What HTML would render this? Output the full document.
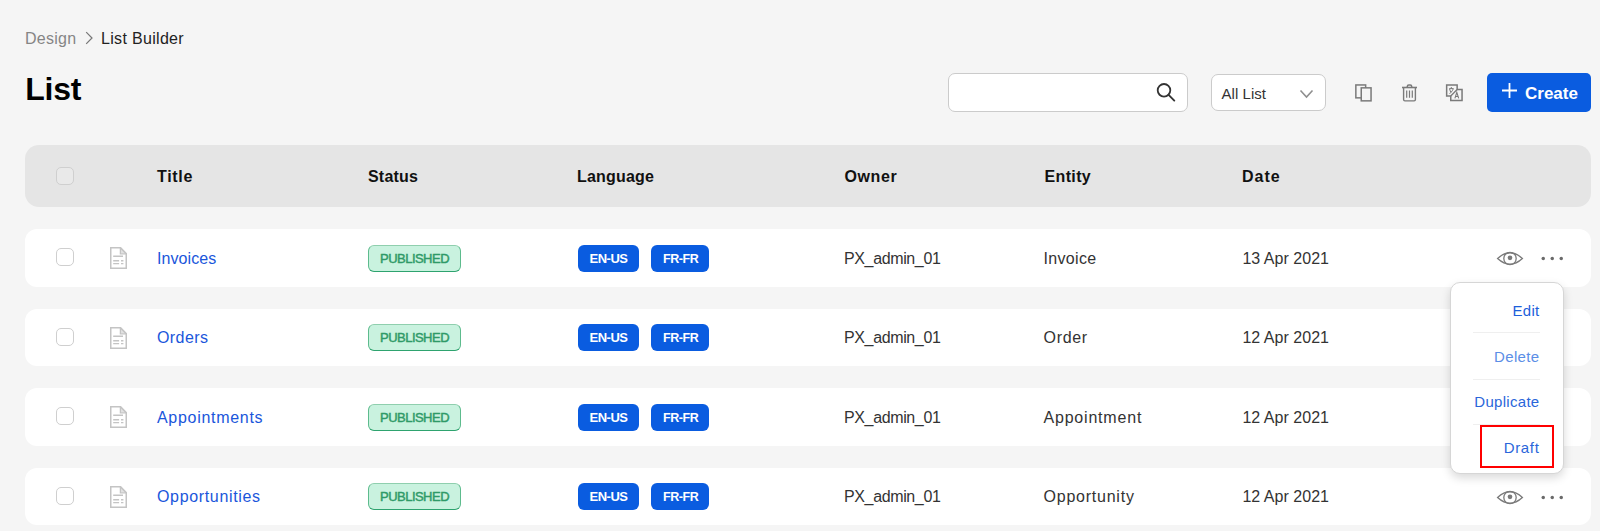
<!DOCTYPE html>
<html>
<head>
<meta charset="utf-8">
<style>
*{box-sizing:border-box;margin:0;padding:0}
html,body{width:1600px;height:531px;overflow:hidden;background:#f5f5f5;font-family:"Liberation Sans",sans-serif;}
.a{position:absolute}
.t{position:absolute;white-space:nowrap;line-height:1}
.search{left:948px;top:73px;width:240px;height:39px;background:#fff;border:1px solid #cbcbcb;border-radius:7px}
.sel{left:1211px;top:74px;width:115px;height:37px;background:#fff;border:1px solid #cbcbcb;border-radius:7px}
.btn{left:1487px;top:73px;width:104px;height:39px;background:#0a5ce0;border-radius:5px}
.hdr{left:25px;top:145px;width:1566px;height:62px;background:#e5e5e5;border-radius:14px}
.row{left:25px;width:1566px;height:57.5px;background:#fff;border-radius:12px}
.cb{width:18px;height:18px;border:1.3px solid #cfcfcf;border-radius:5px;background:#fff}
.pub{width:93px;height:27px;background:#c9f2df;border:1px solid #5dbb8d;border-top-color:#8fcfae;border-bottom-color:#2ea36f;border-radius:6px}
.lang{height:27px;background:#0a5ce0;border-radius:6px}
.menu{left:1449.5px;top:282px;width:114px;height:192px;background:#fff;border:1px solid #d6d6d6;border-radius:10px;box-shadow:0 4px 10px rgba(0,0,0,0.15)}
.sep{left:1473px;width:67px;height:1px;background:#efefef}
</style>
</head>
<body>
<div class="t" style="left:25px;top:31px;font-size:16px;color:#858585;letter-spacing:0.27px;">Design</div>
<svg class="a" style="left:84px;top:30px" width="10" height="16" viewBox="0 0 10 16"><path d="M2.2 2.2 L8 8 L2.2 13.8" fill="none" stroke="#777" stroke-width="1.2"/></svg>
<div class="t" style="left:101px;top:31px;font-size:16px;color:#222;letter-spacing:0.32px;">List Builder</div>
<div class="t" style="left:25.3px;top:73px;font-size:32px;font-weight:700;color:#000;letter-spacing:-0.3px;">List</div>
<div class="a search"></div>
<svg class="a" style="left:1154px;top:81px" width="24" height="24" viewBox="0 0 24 24"><circle cx="10" cy="9.3" r="6.3" fill="none" stroke="#333" stroke-width="1.8"/><path d="M14.6 13.9 L20.3 19.6" stroke="#333" stroke-width="1.9" stroke-linecap="round"/></svg>
<div class="a sel"></div>
<div class="t" style="left:1221.5px;top:86px;font-size:15px;color:#333;letter-spacing:0.05px;">All List</div>
<svg class="a" style="left:1298px;top:88px" width="17" height="12" viewBox="0 0 17 12"><path d="M2.5 2.5 L8.5 9 L14.5 2.5" fill="none" stroke="#8f8f8f" stroke-width="1.6"/></svg>
<svg class="a" style="left:1350px;top:80px" width="26" height="26" viewBox="0 0 26 26"><rect x="5.85" y="4.95" width="9.8" height="12.9" fill="none" stroke="#7a7a7a" stroke-width="1.5"/><rect x="11.25" y="7.85" width="9.8" height="13" fill="#f5f5f5" stroke="#7a7a7a" stroke-width="1.5"/></svg>
<svg class="a" style="left:1397px;top:80px" width="26" height="26" viewBox="0 0 26 26"><path d="M5 7.5 H20" stroke="#7a7a7a" stroke-width="1.6"/><path d="M10.3 7.3 V6.6 Q10.3 5.1 11.8 5.1 H13.2 Q14.7 5.1 14.7 6.6 V7.3" fill="none" stroke="#7a7a7a" stroke-width="1.5"/><path d="M6.6 8 V19.6 Q6.6 20.9 7.9 20.9 H17.1 Q18.4 20.9 18.4 19.6 V8" fill="none" stroke="#7a7a7a" stroke-width="1.4"/><path d="M9.7 10.5 V17.7 M12.5 10.5 V17.7 M15.3 10.5 V17.7" stroke="#7a7a7a" stroke-width="1.2"/></svg>
<svg class="a" style="left:1440px;top:80px" width="26" height="26" viewBox="0 0 26 26"><path d="M6.65 4.95 H17.15 V9.55 H22.05 V20.55 H10.75 V15.95 H6.65 Z" fill="none" stroke="#7a7a7a" stroke-width="1.5" stroke-linejoin="miter"/><path d="M17.15 9.55 L10.75 15.95" stroke="#7a7a7a" stroke-width="1.3"/><path d="M9.2 8.6 H13.4 L12.4 10.6 M11.3 7 V8.6 M9.6 9 L10.8 12.5 L9.6 13.8 M12.4 10.6 L11 12.4" fill="none" stroke="#7a7a7a" stroke-width="1"/><path d="M14.9 18.4 L16.8 12.3 L18.7 18.4 M15.6 16.5 H18" fill="none" stroke="#7a7a7a" stroke-width="1.1"/></svg>
<div class="a btn"></div>
<svg class="a" style="left:1501px;top:82px" width="17" height="17" viewBox="0 0 17 17"><path d="M8.5 1 V16 M1 8.5 H16" stroke="#fff" stroke-width="1.8"/></svg>
<div class="t" style="left:1525px;top:85px;font-size:17px;font-weight:700;color:#fff;">Create</div>
<div class="a hdr"></div>
<div class="a cb" style="left:56px;top:167px;background:#e9e9e9"></div>
<div class="t" style="left:157px;top:169px;font-size:16px;font-weight:700;color:#111;letter-spacing:0.7px;">Title</div>
<div class="t" style="left:368px;top:169px;font-size:16px;font-weight:700;color:#111;letter-spacing:0.2px;">Status</div>
<div class="t" style="left:577px;top:169px;font-size:16px;font-weight:700;color:#111;letter-spacing:0.18px;">Language</div>
<div class="t" style="left:844.5px;top:169px;font-size:16px;font-weight:700;color:#111;letter-spacing:0.6px;">Owner</div>
<div class="t" style="left:1044.5px;top:169px;font-size:16px;font-weight:700;color:#111;letter-spacing:0.36px;">Entity</div>
<div class="t" style="left:1242px;top:169px;font-size:16px;font-weight:700;color:#111;letter-spacing:1.0px;">Date</div>
<div class="a row" style="top:229.00px"></div>
<div class="a cb" style="left:56px;top:248.00px"></div>
<svg class="a" style="left:109px;top:246.25px" width="19" height="24" viewBox="0 0 19 24"><path d="M11.6 1.9 L17.2 7.6 H11.6 Z" fill="#e2e2e2"/><path d="M1.75 1.85 H11.6 L17.25 7.6 V22.35 H1.75 Z" fill="none" stroke="#c4c4c4" stroke-width="1.5"/><path d="M11.4 2.1 V7.8 H17" fill="none" stroke="#c4c4c4" stroke-width="1.3"/><path d="M4.2 10.25 H14 M4.2 14.75 H10.1 M12 14.75 H14.4 M4.2 17.65 H10.1 M12 17.65 H14.4" stroke="#c4c4c4" stroke-width="1.3"/></svg>
<div class="t" style="left:157px;top:251px;font-size:16px;color:#1a56db;letter-spacing:0.07px;">Invoices</div>
<div class="a pub" style="left:368px;top:244.50px"></div>
<div class="t" style="left:380px;top:252px;font-size:13px;color:#2f9a68;letter-spacing:-0.52px;-webkit-text-stroke:0.45px #2f9a68;">PUBLISHED</div>
<div class="a lang" style="left:577.5px;top:244.50px;width:61.5px"></div>
<div class="a lang" style="left:651px;top:244.50px;width:58px"></div>
<div class="t" style="left:589.5px;top:252px;font-size:13px;font-weight:700;color:#fff;letter-spacing:-0.5px;">EN-US</div>
<div class="t" style="left:663px;top:253px;font-size:12.5px;font-weight:700;color:#fff;letter-spacing:-0.45px;">FR-FR</div>
<div class="t" style="left:844px;top:251px;font-size:16px;color:#333;letter-spacing:-0.37px;">PX_admin_01</div>
<div class="t" style="left:1043.5px;top:251px;font-size:16px;color:#333;letter-spacing:0.33px;">Invoice</div>
<div class="t" style="left:1242.4px;top:251px;font-size:16px;color:#333;letter-spacing:0.03px;">13 Apr 2021</div>
<svg class="a" style="left:1495px;top:249.85px" width="30" height="17" viewBox="0 0 30 17"><path d="M2.6 8.5 Q15 -2.9 27.4 8.5 Q15 19.9 2.6 8.5 Z" fill="none" stroke="#7a7a7a" stroke-width="1.3"/><circle cx="15" cy="8.5" r="6.2" fill="none" stroke="#7a7a7a" stroke-width="1.3"/><circle cx="15" cy="7.8" r="2.35" fill="#7a7a7a"/></svg>
<svg class="a" style="left:1539px;top:254.15px" width="26" height="9" viewBox="0 0 26 9"><circle cx="4.25" cy="4.6" r="1.75" fill="#6a6a6a"/><circle cx="13.25" cy="4.6" r="1.75" fill="#6a6a6a"/><circle cx="22.25" cy="4.6" r="1.75" fill="#6a6a6a"/></svg>
<div class="a row" style="top:308.60px"></div>
<div class="a cb" style="left:56px;top:327.60px"></div>
<svg class="a" style="left:109px;top:325.85px" width="19" height="24" viewBox="0 0 19 24"><path d="M11.6 1.9 L17.2 7.6 H11.6 Z" fill="#e2e2e2"/><path d="M1.75 1.85 H11.6 L17.25 7.6 V22.35 H1.75 Z" fill="none" stroke="#c4c4c4" stroke-width="1.5"/><path d="M11.4 2.1 V7.8 H17" fill="none" stroke="#c4c4c4" stroke-width="1.3"/><path d="M4.2 10.25 H14 M4.2 14.75 H10.1 M12 14.75 H14.4 M4.2 17.65 H10.1 M12 17.65 H14.4" stroke="#c4c4c4" stroke-width="1.3"/></svg>
<div class="t" style="left:157px;top:330px;font-size:16px;color:#1a56db;letter-spacing:0.42px;">Orders</div>
<div class="a pub" style="left:368px;top:324.10px"></div>
<div class="t" style="left:380px;top:331px;font-size:13px;color:#2f9a68;letter-spacing:-0.52px;-webkit-text-stroke:0.45px #2f9a68;">PUBLISHED</div>
<div class="a lang" style="left:577.5px;top:324.10px;width:61.5px"></div>
<div class="a lang" style="left:651px;top:324.10px;width:58px"></div>
<div class="t" style="left:589.5px;top:331px;font-size:13px;font-weight:700;color:#fff;letter-spacing:-0.5px;">EN-US</div>
<div class="t" style="left:663px;top:332px;font-size:12.5px;font-weight:700;color:#fff;letter-spacing:-0.45px;">FR-FR</div>
<div class="t" style="left:844px;top:330px;font-size:16px;color:#333;letter-spacing:-0.37px;">PX_admin_01</div>
<div class="t" style="left:1043.5px;top:330px;font-size:16px;color:#333;letter-spacing:0.7px;">Order</div>
<div class="t" style="left:1242.4px;top:330px;font-size:16px;color:#333;letter-spacing:0.03px;">12 Apr 2021</div>
<div class="a row" style="top:388.20px"></div>
<div class="a cb" style="left:56px;top:407.20px"></div>
<svg class="a" style="left:109px;top:405.45px" width="19" height="24" viewBox="0 0 19 24"><path d="M11.6 1.9 L17.2 7.6 H11.6 Z" fill="#e2e2e2"/><path d="M1.75 1.85 H11.6 L17.25 7.6 V22.35 H1.75 Z" fill="none" stroke="#c4c4c4" stroke-width="1.5"/><path d="M11.4 2.1 V7.8 H17" fill="none" stroke="#c4c4c4" stroke-width="1.3"/><path d="M4.2 10.25 H14 M4.2 14.75 H10.1 M12 14.75 H14.4 M4.2 17.65 H10.1 M12 17.65 H14.4" stroke="#c4c4c4" stroke-width="1.3"/></svg>
<div class="t" style="left:157px;top:410px;font-size:16px;color:#1a56db;letter-spacing:0.7px;">Appointments</div>
<div class="a pub" style="left:368px;top:403.70px"></div>
<div class="t" style="left:380px;top:411px;font-size:13px;color:#2f9a68;letter-spacing:-0.52px;-webkit-text-stroke:0.45px #2f9a68;">PUBLISHED</div>
<div class="a lang" style="left:577.5px;top:403.70px;width:61.5px"></div>
<div class="a lang" style="left:651px;top:403.70px;width:58px"></div>
<div class="t" style="left:589.5px;top:411px;font-size:13px;font-weight:700;color:#fff;letter-spacing:-0.5px;">EN-US</div>
<div class="t" style="left:663px;top:412px;font-size:12.5px;font-weight:700;color:#fff;letter-spacing:-0.45px;">FR-FR</div>
<div class="t" style="left:844px;top:410px;font-size:16px;color:#333;letter-spacing:-0.37px;">PX_admin_01</div>
<div class="t" style="left:1043.5px;top:410px;font-size:16px;color:#333;letter-spacing:0.8px;">Appointment</div>
<div class="t" style="left:1242.4px;top:410px;font-size:16px;color:#333;letter-spacing:0.03px;">12 Apr 2021</div>
<div class="a row" style="top:467.80px"></div>
<div class="a cb" style="left:56px;top:486.80px"></div>
<svg class="a" style="left:109px;top:485.05px" width="19" height="24" viewBox="0 0 19 24"><path d="M11.6 1.9 L17.2 7.6 H11.6 Z" fill="#e2e2e2"/><path d="M1.75 1.85 H11.6 L17.25 7.6 V22.35 H1.75 Z" fill="none" stroke="#c4c4c4" stroke-width="1.5"/><path d="M11.4 2.1 V7.8 H17" fill="none" stroke="#c4c4c4" stroke-width="1.3"/><path d="M4.2 10.25 H14 M4.2 14.75 H10.1 M12 14.75 H14.4 M4.2 17.65 H10.1 M12 17.65 H14.4" stroke="#c4c4c4" stroke-width="1.3"/></svg>
<div class="t" style="left:157px;top:489px;font-size:16px;color:#1a56db;letter-spacing:0.66px;">Opportunities</div>
<div class="a pub" style="left:368px;top:483.30px"></div>
<div class="t" style="left:380px;top:490px;font-size:13px;color:#2f9a68;letter-spacing:-0.52px;-webkit-text-stroke:0.45px #2f9a68;">PUBLISHED</div>
<div class="a lang" style="left:577.5px;top:483.30px;width:61.5px"></div>
<div class="a lang" style="left:651px;top:483.30px;width:58px"></div>
<div class="t" style="left:589.5px;top:490px;font-size:13px;font-weight:700;color:#fff;letter-spacing:-0.5px;">EN-US</div>
<div class="t" style="left:663px;top:491px;font-size:12.5px;font-weight:700;color:#fff;letter-spacing:-0.45px;">FR-FR</div>
<div class="t" style="left:844px;top:489px;font-size:16px;color:#333;letter-spacing:-0.37px;">PX_admin_01</div>
<div class="t" style="left:1043.5px;top:489px;font-size:16px;color:#333;letter-spacing:0.77px;">Opportunity</div>
<div class="t" style="left:1242.4px;top:489px;font-size:16px;color:#333;letter-spacing:0.03px;">12 Apr 2021</div>
<svg class="a" style="left:1495px;top:488.65px" width="30" height="17" viewBox="0 0 30 17"><path d="M2.6 8.5 Q15 -2.9 27.4 8.5 Q15 19.9 2.6 8.5 Z" fill="none" stroke="#7a7a7a" stroke-width="1.3"/><circle cx="15" cy="8.5" r="6.2" fill="none" stroke="#7a7a7a" stroke-width="1.3"/><circle cx="15" cy="7.8" r="2.35" fill="#7a7a7a"/></svg>
<svg class="a" style="left:1539px;top:492.95px" width="26" height="9" viewBox="0 0 26 9"><circle cx="4.25" cy="4.6" r="1.75" fill="#6a6a6a"/><circle cx="13.25" cy="4.6" r="1.75" fill="#6a6a6a"/><circle cx="22.25" cy="4.6" r="1.75" fill="#6a6a6a"/></svg>
<div class="a menu"></div>
<div class="t" style="left:1440px;width:99.5px;text-align:right;top:303px;font-size:15px;color:#1d5fdb;letter-spacing:0.3px">Edit</div>
<div class="a sep" style="top:332px"></div>
<div class="t" style="left:1440px;width:99.5px;text-align:right;top:349px;font-size:15px;color:#5b8ee6;letter-spacing:0.35px">Delete</div>
<div class="a sep" style="top:379px"></div>
<div class="t" style="left:1440px;width:99.5px;text-align:right;top:394px;font-size:15px;color:#2a66da;letter-spacing:0.3px">Duplicate</div>
<div class="a sep" style="top:424px"></div>
<div class="t" style="left:1440px;width:99.5px;text-align:right;top:440px;font-size:15px;color:#2a66da;letter-spacing:0.65px">Draft</div>
<div class="a" style="left:1480px;top:425px;width:74px;height:42.5px;border:2px solid #f00"></div>
</body>
</html>
